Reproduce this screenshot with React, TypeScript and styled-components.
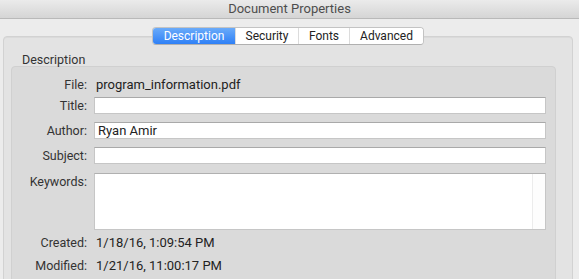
import React from "react";
import styled, { createGlobalStyle } from "styled-components";

const Global = createGlobalStyle`
  html, body {
    margin: 0;
    padding: 0;
    background: #ececec;
  }
  body {
    font-family: Roboto, "Liberation Sans", sans-serif;
    -webkit-font-smoothing: antialiased;
  }
`;

const tabs = ["Description", "Security", "Fonts", "Advanced"];
const tabWidths = [82, 62, 50, 73];

function App() {
  return (
    <Window>
      <Global />
      <TitleBar>Document Properties</TitleBar>
      <Panel>
        <Segmented>
          {tabs.map((t, i) => (
            <Segment key={t} $active={i === 0} $w={tabWidths[i]}>
              {t}
            </Segment>
          ))}
        </Segmented>
        <GroupLabel>Description</GroupLabel>
        <Group>
          <Row $h={17}>
            <Label>File:</Label>
            <Value>program_information.pdf</Value>
          </Row>
          <Row $h={17} $mt={4}>
            <Label>Title:</Label>
            <Field />
          </Row>
          <Row $h={17} $mt={8}>
            <Label>Author:</Label>
            <Field>Ryan Amir</Field>
          </Row>
          <Row $h={17} $mt={8}>
            <Label>Subject:</Label>
            <Field />
          </Row>
          <Row $h={57} $mt={9} $top>
            <Label>Keywords:</Label>
            <TextArea>
              <Scroller />
            </TextArea>
          </Row>
          <Row $h={17} $mt={4}>
            <Label>Created:</Label>
            <Value>1/18/16, 1:09:54 PM</Value>
          </Row>
          <Row $h={17} $mt={6}>
            <Label>Modified:</Label>
            <Value>1/21/16, 11:00:17 PM</Value>
          </Row>
        </Group>
      </Panel>
    </Window>
  );
}

export default App;

const Window = styled.div`
  width: 579px;
  height: 279px;
  overflow: hidden;
  background: #ececec;
`;

const TitleBar = styled.div`
  height: 18px;
  line-height: 18px;
  text-align: center;
  font-size: 13px;
  color: #4d4d4d;
  background: linear-gradient(#ebebeb, #d5d5d5);
  border-bottom: 1px solid #b9b9b9;
`;

const Panel = styled.div`
  margin: 17px 6px 0 3px;
  height: 260px;
  background: #e3e3e3;
  border: 1px solid #d2d2d2;
  border-radius: 4px;
  box-shadow: inset 0 1px 0 #dadada;
`;

const Segmented = styled.div`
  display: flex;
  width: max-content;
  margin: -10px auto 0;
  height: 16px;
  border: 1px solid #c3c3c3;
  border-bottom-color: #b0b0b0;
  border-radius: 4px;
  background: #fff;
  overflow: hidden;
`;

const Segment = styled.div<{ $active?: boolean; $w: number }>`
  width: ${(p) => p.$w}px;
  display: flex;
  align-items: center;
  justify-content: center;
  font-size: 12px;
  color: ${(p) => (p.$active ? "#fff" : "#222")};
  background: ${(p) =>
    p.$active ? "linear-gradient(#6aabfa, #2f80f6)" : "#fff"};
  border-left: 1px solid #dcdcdc;
  &:first-child {
    border-left: none;
  }
`;

const GroupLabel = styled.div`
  font-size: 12.5px;
  color: #333;
  margin: 7px 0 0 18px;
  height: 15px;
  line-height: 15px;
`;

const Group = styled.div`
  margin: -1px 16px 0 7px;
  height: 230px;
  padding: 9px 9px 0 0;
  background: #dadada;
  border: 1px solid #d0d0d0;
  border-radius: 4px;
  box-sizing: border-box;
`;

const Row = styled.div<{ $h: number; $mt?: number; $top?: boolean }>`
  display: grid;
  grid-template-columns: 75px 1fr;
  column-gap: 7px;
  align-items: ${(p) => (p.$top ? "start" : "center")};
  height: ${(p) => p.$h}px;
  margin-top: ${(p) => p.$mt || 0}px;
`;

const Label = styled.div`
  text-align: right;
  font-size: 12.5px;
  color: #333;
  line-height: 17px;
`;

const Value = styled.div`
  font-size: 13px;
  color: #222;
  padding-left: 2px;
  line-height: 17px;
`;

const Field = styled.div`
  height: 17px;
  box-sizing: border-box;
  background: #fff;
  border: 1px solid #c6c6c6;
  border-top-color: #a9a9a9;
  font-size: 13px;
  color: #222;
  line-height: 15px;
  padding-left: 3px;
`;

const TextArea = styled.div`
  height: 57px;
  box-sizing: border-box;
  background: #fff;
  border: 1px solid #c6c6c6;
  border-top-color: #b0b0b0;
  display: flex;
  justify-content: flex-end;
`;

const Scroller = styled.div`
  width: 12px;
  border-left: 1px solid #ececec;
  background: #fdfdfd;
`;
